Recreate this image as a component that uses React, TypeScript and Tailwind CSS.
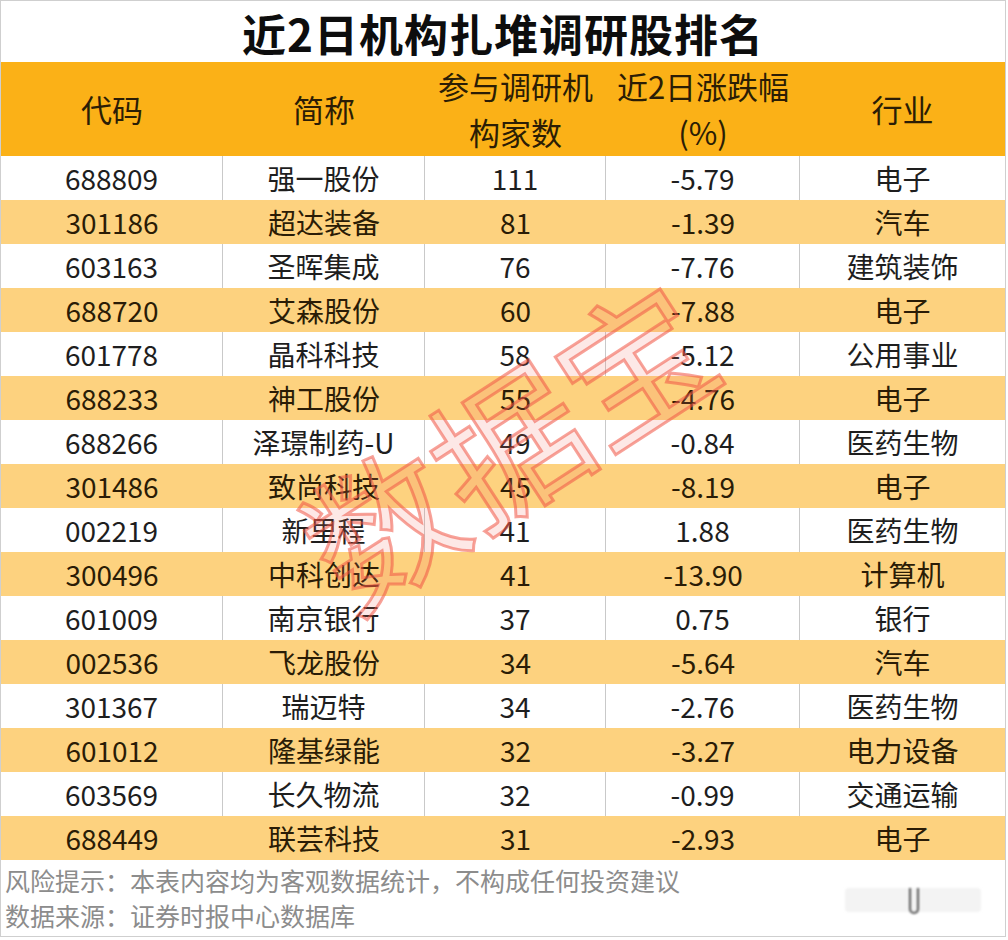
const rows = [
  ["688809", "强一股份", "111", "-5.79", "电子"],
  ["301186", "超达装备", "81", "-1.39", "汽车"],
  ["603163", "圣晖集成", "76", "-7.76", "建筑装饰"],
  ["688720", "艾森股份", "60", "-7.88", "电子"],
  ["601778", "晶科科技", "58", "-5.12", "公用事业"],
  ["688233", "神工股份", "55", "-4.76", "电子"],
  ["688266", "泽璟制药-U", "49", "-0.84", "医药生物"],
  ["301486", "致尚科技", "45", "-8.19", "电子"],
  ["002219", "新里程", "41", "1.88", "医药生物"],
  ["300496", "中科创达", "41", "-13.90", "计算机"],
  ["601009", "南京银行", "37", "0.75", "银行"],
  ["002536", "飞龙股份", "34", "-5.64", "汽车"],
  ["301367", "瑞迈特", "34", "-2.76", "医药生物"],
  ["601012", "隆基绿能", "32", "-3.27", "电力设备"],
  ["603569", "长久物流", "32", "-0.99", "交通运输"],
  ["688449", "联芸科技", "31", "-2.93", "电子"],
];

const font = "font-['Microsoft_YaHei','Noto_Sans_CJK_SC',sans-serif]";

export default function App() {
  return (
    <div className={`relative w-[1008px] h-[940px] bg-white overflow-hidden ${font}`}>
      <div className="w-[1006px] h-[937px] border border-[#cfcfcf] flex flex-col">
        {/* title */}
        <div className="h-[61px] flex items-center justify-center pt-[2px]">
          <h1 className="text-[44px] font-bold text-[#0d0d0d] leading-none tracking-[1px]">近2日机构扎堆调研股排名</h1>
        </div>

        {/* header */}
        <div className="grid grid-cols-[222px_202px_181px_194px_1fr] h-[94px] bg-[#fbb117] text-[#2b1d05] text-[31px] leading-[46px] text-center">
          <div className="flex items-center justify-center">代码</div>
          <div className="flex items-center justify-center">简称</div>
          <div className="flex flex-col items-center justify-center">
            <span>参与调研机</span>
            <span>构家数</span>
          </div>
          <div className="flex flex-col items-center justify-center">
            <span>近2日涨跌幅</span>
            <span>(%)</span>
          </div>
          <div className="flex items-center justify-center">行业</div>
        </div>

        {/* rows */}
        {rows.map((r, i) => {
          const odd = i % 2 === 1;
          return (
            <div
              key={r[0]}
              className={`grid grid-cols-[222px_202px_181px_194px_1fr] h-[44px] text-[28px] text-center ${
                odd ? "bg-[#fdd27f] text-[#2a1c06]" : "bg-white text-[#1e1e1e]"
              }`}
            >
              {r.map((c, j) => (
                <div
                  key={j}
                  className={`flex items-center justify-center leading-none ${
                    j < 4 && !odd ? "border-r border-[#c9c9c9]" : ""
                  }`}
                >
                  {c}
                </div>
              ))}
            </div>
          );
        })}

        {/* footer */}
        <div className="flex-1 relative pl-[4px] pt-[3px] text-[25px] text-[#8c8c8c] leading-[35px]">
          <p>风险提示：本表内容均为客观数据统计，不构成任何投资建议</p>
          <p>数据来源：证券时报中心数据库</p>
          <div className="absolute right-[24px] top-[28px] w-[136px] h-[24px] bg-[#f3f3f3] rounded-sm blur-[1px]">
            <div className="absolute left-[64px] top-[0px] w-[10px] h-[26px] border-x-2 border-b-2 border-[#555] rounded-b-md" />
          </div>
        </div>
      </div>

      {/* watermark */}
      <div className="absolute left-[505px] top-[440px] -translate-x-1/2 -translate-y-1/2 -rotate-[33deg] pointer-events-none">
        <span className="block whitespace-nowrap text-[150px] leading-none font-normal text-[rgba(245,110,100,0.16)] [-webkit-text-stroke:3px_rgba(240,85,70,0.55)]">
          数据宝
        </span>
      </div>
    </div>
  );
}
